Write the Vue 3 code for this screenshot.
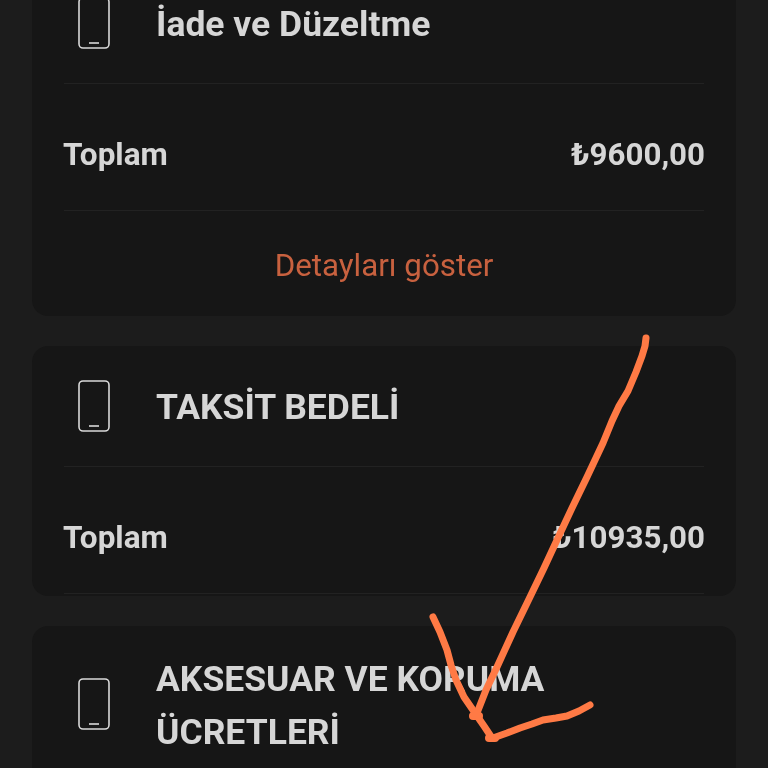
<template>
  <div class="page">
    <section v-for="card in cards" :key="card.title" class="card">
      <header class="card-head" :class="{ tall: !card.total }">
        <svg class="phone" width="32" height="52" viewBox="0 0 32 52" fill="none" stroke="#d9d9d9">
          <rect x="1" y="1" width="30" height="50" rx="4" stroke-width="1.6" />
          <path d="M11 46h10" stroke-width="1.6" />
        </svg>
        <h2 class="card-title">{{ card.title }}</h2>
      </header>
      <div v-if="card.total" class="total-row">
        <span class="total-label">Toplam</span>
        <span class="total-value">{{ card.total }}</span>
      </div>
      <div v-if="card.details" class="details">Detayları göster</div>
    </section>

    <svg class="scribble" width="768" height="768" viewBox="0 0 768 768" fill="none" stroke="#ff7a45" stroke-width="7" stroke-linecap="round" stroke-linejoin="round">
      <path d="M646 338L645 346L642 356L636 372L628 391L619 406L612 421L603 443L595 460L587 477L572 508L557 540L544 568L530 597L513 632L497 667L486 690L477 713" />
      <path d="M433 617L440 632L447 650L451 665L456 680L464 697L475 713L484 726L492 738" />
      <path d="M493 738L507 733L520 728L532 724L543 720L556 718L567 716L579 711L590 705" />
      <path d="M473 716h6" stroke-width="8" />
      <path d="M489 738h6" stroke-width="8" />
    </svg>
  </div>
</template>

<script setup>
const cards = [
  { title: 'İade ve Düzeltme', total: '₺9600,00', details: true },
  { title: 'TAKSİT BEDELİ', total: '₺10935,00', details: false },
  { title: 'AKSESUAR VE KORUMA ÜCRETLERİ', total: '', details: false }
]
</script>

<style>
body {
  background: #1c1c1c;
}
</style>

<style scoped>
.page {
  position: relative;
  height: 768px;
  overflow: hidden;
  box-sizing: border-box;
  padding: 0 32px;
  background: #1c1c1c;
  font-family: Roboto, "Noto Sans", sans-serif;
  color: #d6d6d6;
  filter: blur(0.4px);
}

.card {
  margin-bottom: 30px;
  padding: 0 32px 2px;
  background: #161616;
  border-radius: 16px;
}

.card:first-child {
  margin-top: -37px;
}

.card-head {
  display: flex;
  align-items: center;
  gap: 46px;
  height: 120px;
  padding-left: 14px;
  border-bottom: 1px solid #222222;
}

.card-head.tall {
  height: 156px;
  border-bottom: 0;
}

.phone {
  flex: none;
}

.card-title {
  margin: 0;
  padding-top: 3px;
  font-size: 35.5px;
  font-weight: 700;
  line-height: 53px;
  width: 440px;
}

.total-row {
  display: flex;
  justify-content: space-between;
  align-items: center;
  box-sizing: border-box;
  height: 127px;
  padding-top: 15px;
  border-bottom: 1px solid #222222;
  font-size: 31.5px;
  font-weight: 700;
}

.total-label {
  margin-left: -1px;
}

.total-value {
  margin-right: -1px;
  font-size: 31.3px;
}

.details {
  display: flex;
  justify-content: center;
  align-items: center;
  box-sizing: border-box;
  height: 103px;
  padding-top: 6px;
  font-size: 31.3px;
  color: #c8613f;
}

.scribble {
  position: absolute;
  top: 0;
  left: 0;
}
</style>
